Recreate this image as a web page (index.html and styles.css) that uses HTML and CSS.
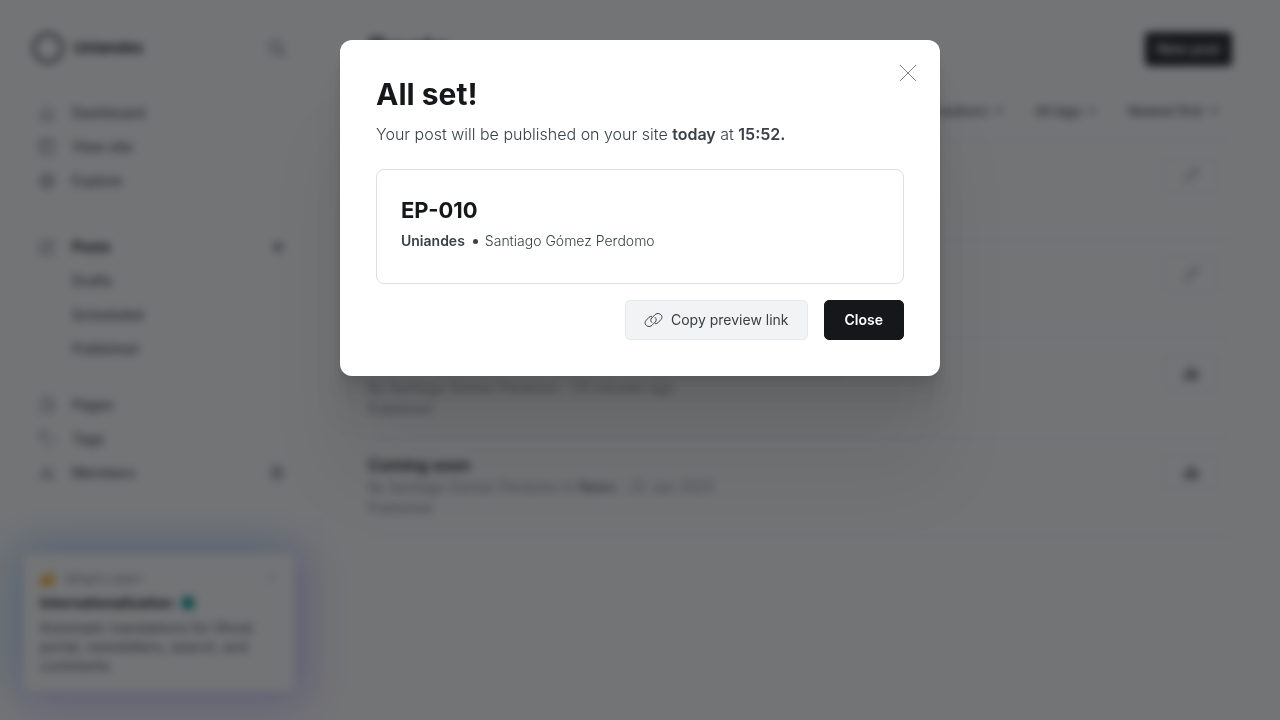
FILE: index.html
```html
<!DOCTYPE html>
<html lang="en">
<head>
<meta charset="utf-8">
<meta name="viewport" content="width=device-width, initial-scale=1">
<title>Posts - Uniandes</title>
<link rel="stylesheet" href="styles.css">
</head>
<body>
<div class="app">
  <aside class="sidebar">
    <header class="brand">
      <span class="brand-logo"></span>
      <strong class="brand-name">Uniandes</strong>
      <button class="icon-button" aria-label="Search"><svg class="icon-search" viewBox="0 0 20 20"><circle cx="8.5" cy="8.5" r="6.5"/><path d="M13.5 13.5 19 19"/></svg></button>
    </header>
    <nav class="nav">
      <div class="nav-group">
        <a class="nav-item" href="#"><svg class="icon" viewBox="0 0 16 16"><path d="M1 7.500 8 1l7 6.500M2.500 6.500V15H6v-4.500h4V15h3.500V6.500"/></svg>Dashboard</a>
        <a class="nav-item" href="#"><svg class="icon" viewBox="0 0 16 16"><rect x="1" y="1" width="14" height="14" rx="1"/><path d="M1 5h14M6 5v10M3 3h1M5.500 3h1"/></svg>View site</a>
        <a class="nav-item" href="#"><svg class="icon" viewBox="0 0 16 16"><circle cx="8" cy="8" r="7"/><circle cx="8" cy="8" r="2"/><path d="M8 1v5M8 10v5M1 8h5M10 8h5M3 3l3.500 3.500M9.500 9.500 13 13M13 3 9.500 6.500M6.500 9.500 3 13"/></svg>Explore</a>
      </div>
      <div class="nav-group">
        <a class="nav-item nav-active" href="#"><svg class="icon" viewBox="0 0 16 16"><path d="M9 2.500H1V15h12.500V8M6 10l1-3 7-6 1 1-6 7z"/></svg>Posts<svg class="icon nav-end icon-plus" viewBox="0 0 16 16"><path d="M8 2v12M2 8h12"/></svg></a>
        <a class="nav-item nav-sub" href="#">Drafts</a>
        <a class="nav-item nav-sub" href="#">Scheduled</a>
        <a class="nav-item nav-sub" href="#">Published</a>
      </div>
      <div class="nav-group">
        <a class="nav-item" href="#"><svg class="icon" viewBox="0 0 16 16"><path d="M4.500 3.500V1h6L14 4.500V13h-2M2 3.500h6.500L11.500 7v8H2z"/></svg>Pages</a>
        <a class="nav-item" href="#"><svg class="icon" viewBox="0 0 16 16"><path d="M1 1h6l8 8-6 6-8-8z"/><circle cx="4.500" cy="4.500" r="1"/></svg>Tags</a>
        <a class="nav-item" href="#"><svg class="icon" viewBox="0 0 16 16"><circle cx="6" cy="5.500" r="2.500"/><path d="M1 13c0-6 10-6 10 0zM10 3c4 0 3 5 0 5M11.500 9c2.500.5 3.500 2 3.500 4h-3"/></svg>Members<span class="nav-end count">0</span></a>
      </div>
    </nav>
    <section class="news">
      <header class="news-head"><span class="emoji-party"></span>What’s new?<button class="news-close" aria-label="Dismiss"><svg class="icon-small" viewBox="0 0 10 10"><path d="m1 1 8 8M9 1 1 9"/></svg></button></header>
      <h2 class="news-title">Internationalization <span class="emoji-globe"></span></h2>
      <p class="news-text">Automatic translations for Ghost portal, newsletters, search, and comments.</p>
    </section>
  </aside>
  <main class="main">
    <header class="main-head">
      <h1 class="page-title">Posts</h1>
      <button class="new-post">New post</button>
    </header>
    <div class="filters">
      <label class="filter"><select aria-label="Author"><option>All authors</option></select><svg class="chevron" viewBox="0 0 8 8"><path d="m1 2 3 3 3-3"/></svg></label>
      <label class="filter"><select aria-label="Tag"><option>All tags</option></select><svg class="chevron" viewBox="0 0 8 8"><path d="m1 2 3 3 3-3"/></svg></label>
      <label class="filter"><select aria-label="Sort order"><option>Newest first</option></select><svg class="chevron" viewBox="0 0 8 8"><path d="m1 2 3 3 3-3"/></svg></label>
    </div>
    <ul class="posts">
      <li class="post">
        <button class="post-action" aria-label="Edit post"><svg class="icon" viewBox="0 0 16 16"><path d="m2 14 1-4 9-9 3 3-9 9zM10 3l3 3"/></svg></button>
      </li>
      <li class="post">
        <button class="post-action" aria-label="Edit post"><svg class="icon" viewBox="0 0 16 16"><path d="m2 14 1-4 9-9 3 3-9 9zM10 3l3 3"/></svg></button>
      </li>
      <li class="post">
        <div class="post-info">
          <p class="post-meta">By Santiago Gómez Perdomo - 25 minutes ago</p>
          <p class="post-meta">Published</p>
        </div>
        <button class="post-action" aria-label="Post analytics"><svg class="icon icon-stats" viewBox="0 0 16 16"><path d="M1 9h4v5H1zM6 3h4v11H6zM11 7h4v7h-4z"/></svg></button>
      </li>
      <li class="post">
        <div class="post-info">
          <h3 class="post-title">Coming soon</h3>
          <p class="post-meta">By Santiago Gómez Perdomo in <b>News</b> - 22 Jun 2023</p>
          <p class="post-meta">Published</p>
        </div>
        <button class="post-action" aria-label="Post analytics"><svg class="icon icon-stats" viewBox="0 0 16 16"><path d="M1 9h4v5H1zM6 3h4v11H6zM11 7h4v7h-4z"/></svg></button>
      </li>
    </ul>
  </main>
</div>
<div class="overlay">
  <div class="modal" role="dialog" aria-modal="true" aria-labelledby="modal-title">
    <button class="modal-x" aria-label="Close dialog"><svg class="icon-x" viewBox="0 0 18 18"><path d="m1 1 16 16M17 1 1 17"/></svg></button>
    <h2 class="modal-title" id="modal-title">All set!</h2>
    <p class="modal-text">Your post will be published on your site <b>today</b> at <b>15:52.</b></p>
    <article class="preview">
      <h3 class="preview-title">EP-010</h3>
      <p class="preview-meta"><b>Uniandes</b><span class="dot"></span>Santiago Gómez Perdomo</p>
    </article>
    <footer class="modal-actions">
      <button class="button"><svg class="icon-link" viewBox="0 0 19 16"><path d="M8.200 10.800C6.600 9.600 6.300 7.500 7.700 6L11 2.700c3.500-3.300 9.200.9 6 4.800l-3 3.200c-.8.800-1.800 1.100-2.900 1"/><path d="M10.800 5.200c1.600 1.200 1.900 3.300.5 4.800L8 13.300c-3.500 3.300-9.200-.9-6-4.800l3-3.200c.8-.8 1.800-1.100 2.900-1"/></svg>Copy preview link</button>
      <button class="button button-dark">Close</button>
    </footer>
  </div>
</div>
</body>
</html>
```
FILE: styles.css
```css
* { box-sizing: border-box; }
body {
  margin: 0;
  font: 14px/20px Inter, "Liberation Sans", sans-serif;
  color: #15171a;
  background: #fff;
}
h1, h2, h3, p, ul { margin: 0; padding: 0; }
button, select { font: inherit; color: inherit; border: 0; background: none; padding: 0; }
svg { fill: none; stroke: currentColor; flex: none; }

.app { display: flex; min-height: 100vh; }

/* Sidebar */
.sidebar {
  display: flex;
  flex-direction: column;
  flex: 0 0 320px;
  padding: 32px 25px 29px 24px;
  border-right: 1px solid #f1f3f4;
}
.brand { display: flex; align-items: center; height: 32px; padding: 0 8px; margin-bottom: 32px; }
.brand-logo { width: 32px; height: 32px; border: 4px solid #66696d; border-radius: 50%; }
.brand-name { margin-left: 10px; font-size: 15px; font-weight: 700; }
.icon-button { display: flex; margin-left: auto; color: #626d79; }
.icon-search { width: 18px; height: 18px; stroke-width: 2; }
.nav { display: flex; flex-direction: column; gap: 32px; }
.nav-group:nth-child(3) { margin-top: -10px; }
.nav-item {
  display: flex;
  align-items: center;
  height: 34px;
  padding: 0 8px 0 15px;
  color: #464d55;
  font-weight: 500;
  text-decoration: none;
}
.icon { width: 16px; height: 16px; }
.nav-item > .icon:first-child { margin-right: 17px; }
.nav-active { color: #15171a; font-weight: 700; }
.nav-active > .icon { color: #394047; }
.nav-sub { padding-left: 48px; }
.nav-end { margin-left: auto; }
.icon-plus { stroke-width: 2; }
.count { padding: 0 5px; border-radius: 10px; background: #dfe3e6; font-size: 12px; }
.news {
  margin-top: auto;
  padding: 16px;
  border-radius: 5px;
  background: #fff;
  box-shadow: -7px -6px 42px 8px rgb(75 195 226 / 28%), 7px 6px 42px 8px rgb(180 103 255 / 30%);
}
.news-head { display: flex; align-items: center; height: 18px; color: #7c8b9a; font-size: 13px; }
.emoji-party { width: 15px; height: 14px; margin-right: 10px; background: #f5b73d; clip-path: polygon(0 100%, 0 40%, 60% 20%, 100% 0, 90% 100%); }
.news-close { display: flex; margin: 0 2px 4px auto; }
.icon-small { width: 9px; height: 9px; }
.news-title { display: flex; align-items: center; margin: 5px 0; font-size: 14px; line-height: 20px; font-weight: 700; }
.emoji-globe { width: 14px; height: 14px; margin-left: 8px; border-radius: 50%; background: #0c9c9c; }
.news-text { color: #464d55; line-height: 19px; }

/* Post list */
.main { flex: 1; min-width: 0; padding: 32px 48px; }
.main-head { display: flex; justify-content: space-between; align-items: center; height: 34px; }
.page-title { font-size: 30px; line-height: 34px; font-weight: 700; }
.new-post { height: 34px; padding: 0 12px; border-radius: 4px; background: #15171a; color: #fff; font-weight: 500; }
.filters { display: flex; justify-content: flex-end; gap: 32px; margin: 35px 14px 19px 0; }
.filter { display: flex; align-items: center; gap: 6px; height: 20px; font-size: 13px; font-weight: 500; color: #464d55; }
.filter select { appearance: none; }
.chevron { width: 8px; height: 8px; stroke-width: 2; }
.posts { list-style: none; border-top: 1px solid #e6e9eb; }
.post {
  display: flex;
  justify-content: space-between;
  align-items: flex-start;
  min-height: 99px;
  padding: 16px 14px 18px 0;
  border-bottom: 1px solid #e6e9eb;
}
.post-info { align-self: flex-end; line-height: 21px; }
.post-title { font-size: 16px; line-height: 22px; font-weight: 600; }
.post-meta { color: #626d79; font-weight: 300; }
.post-meta b { font-weight: 500; }
.post-action {
  display: flex;
  align-items: center;
  justify-content: center;
  width: 54px;
  height: 36px;
  margin-left: auto;
  border: 1px solid #e6e9eb;
  border-radius: 4px;
  color: #394047;
}
.icon-stats { fill: #b4b7bb; }

/* Dialog */
.overlay {
  position: fixed;
  inset: 0;
  padding: 40px;
  background: rgb(21 23 26 / 60%);
  backdrop-filter: blur(4px);
}
.modal {
  position: relative;
  max-width: 600px;
  margin: 0 auto;
  padding: 36px;
  border-radius: 12px;
  background: #fff;
  box-shadow: 0 3px 2px rgb(0 0 0 / 2%), 0 7px 5px rgb(0 0 0 / 3%), 0 12px 10px rgb(0 0 0 / 4%), 0 22px 18px rgb(0 0 0 / 4%), 0 42px 33px rgb(0 0 0 / 5%), 0 100px 80px rgb(0 0 0 / 7%);
}
.modal-x { position: absolute; top: 24px; right: 23px; display: flex; color: #7f8183; }
.icon-x { width: 18px; height: 18px; }
.modal-title { font-size: 30px; line-height: 36px; font-weight: 700; }
.modal-text { margin: 10px 0 23px; font-size: 16px; line-height: 24px; font-weight: 300; color: #394047; }
.modal-text b { font-weight: 600; }
.preview { padding: 24px; border: 1px solid #dddfe2; border-radius: 8px; }
.preview-title { font-size: 22px; line-height: 32px; font-weight: 700; }
.preview-meta { display: flex; align-items: center; margin: 5px 0 8px; font-weight: 300; color: #394047; }
.preview-meta b { font-weight: 600; }
.dot { width: 5px; height: 5px; margin: 0 7px 0 8px; border-radius: 50%; background: #394047; }
.modal-actions { display: flex; justify-content: flex-end; gap: 16px; margin-top: 16px; }
.button {
  display: flex;
  align-items: center;
  gap: 8px;
  height: 40px;
  padding: 0 18px;
  border: 1px solid #e6e9eb;
  border-radius: 5px;
  background: #f1f3f4;
  color: #394047;
}
.button-dark { padding: 0 20px; border-color: #15171a; background: #15171a; color: #fff; font-weight: 600; }
.icon-link { width: 19px; height: 16px; }
```
